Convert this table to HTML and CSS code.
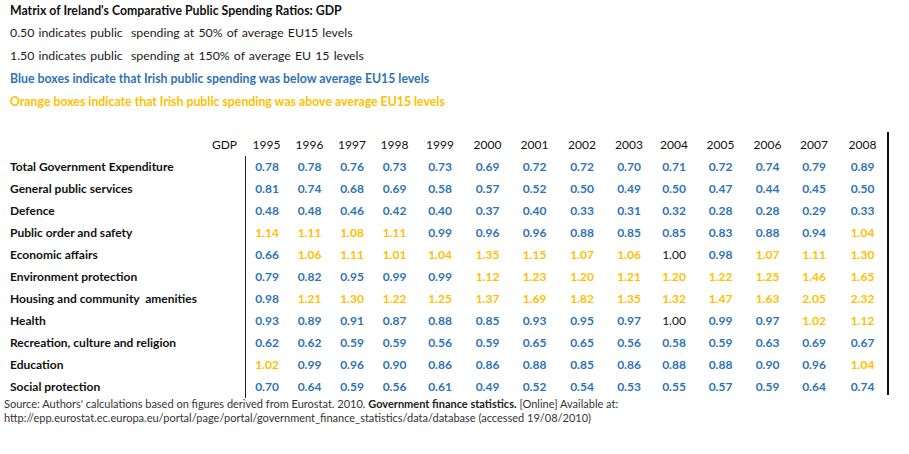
FILE: index.html
```html
<!DOCTYPE html>
<html lang="en">
<head>
<meta charset="utf-8">
<title>Matrix of Ireland's Comparative Public Spending Ratios: GDP</title>
<link rel="stylesheet" href="styles.css">
</head>
<body>
<div class="page">
  <div class="intro">
    <p class="title">Matrix of Ireland's Comparative Public Spending Ratios: GDP</p>
    <p class="note plain">0.50 indicates public&nbsp; spending at 50% of average EU15 levels</p>
    <p class="note plain">1.50 indicates public&nbsp; spending at 150% of average EU 15 levels</p>
    <p class="note key-blue">Blue boxes indicate that Irish public spending was below average EU15 levels</p>
    <p class="note key-orange">Orange boxes indicate that Irish public spending was above average EU15 levels</p>
  </div>

  <div class="matrix">
    <div class="row head">
      <div class="label gdp">GDP</div>
      <div>1995</div><div>1996</div><div>1997</div><div>1998</div><div>1999</div><div>2000</div><div>2001</div><div>2002</div><div>2003</div><div>2004</div><div>2005</div><div>2006</div><div>2007</div><div>2008</div>
    </div>
    <div class="row">
      <div class="label">Total Government Expenditure</div>
      <div class="b first">0.78</div><div class="b">0.78</div><div class="b">0.76</div><div class="b">0.73</div><div class="b">0.73</div><div class="b">0.69</div><div class="b">0.72</div><div class="b">0.72</div><div class="b">0.70</div><div class="b">0.71</div><div class="b">0.72</div><div class="b">0.74</div><div class="b">0.79</div><div class="b">0.89</div>
    </div>
    <div class="row">
      <div class="label">General public services</div>
      <div class="b first">0.81</div><div class="b">0.74</div><div class="b">0.68</div><div class="b">0.69</div><div class="b">0.58</div><div class="b">0.57</div><div class="b">0.52</div><div class="b">0.50</div><div class="b">0.49</div><div class="b">0.50</div><div class="b">0.47</div><div class="b">0.44</div><div class="b">0.45</div><div class="b">0.50</div>
    </div>
    <div class="row">
      <div class="label">Defence</div>
      <div class="b first">0.48</div><div class="b">0.48</div><div class="b">0.46</div><div class="b">0.42</div><div class="b">0.40</div><div class="b">0.37</div><div class="b">0.40</div><div class="b">0.33</div><div class="b">0.31</div><div class="b">0.32</div><div class="b">0.28</div><div class="b">0.28</div><div class="b">0.29</div><div class="b">0.33</div>
    </div>
    <div class="row">
      <div class="label">Public order and safety</div>
      <div class="o first">1.14</div><div class="o">1.11</div><div class="o">1.08</div><div class="o">1.11</div><div class="b">0.99</div><div class="b">0.96</div><div class="b">0.96</div><div class="b">0.88</div><div class="b">0.85</div><div class="b">0.85</div><div class="b">0.83</div><div class="b">0.88</div><div class="b">0.94</div><div class="o">1.04</div>
    </div>
    <div class="row">
      <div class="label">Economic affairs</div>
      <div class="b first">0.66</div><div class="o">1.06</div><div class="o">1.11</div><div class="o">1.01</div><div class="o">1.04</div><div class="o">1.35</div><div class="o">1.15</div><div class="o">1.07</div><div class="o">1.06</div><div class="k">1.00</div><div class="b">0.98</div><div class="o">1.07</div><div class="o">1.11</div><div class="o">1.30</div>
    </div>
    <div class="row">
      <div class="label">Environment protection</div>
      <div class="b first">0.79</div><div class="b">0.82</div><div class="b">0.95</div><div class="b">0.99</div><div class="b">0.99</div><div class="o">1.12</div><div class="o">1.23</div><div class="o">1.20</div><div class="o">1.21</div><div class="o">1.20</div><div class="o">1.22</div><div class="o">1.25</div><div class="o">1.46</div><div class="o">1.65</div>
    </div>
    <div class="row">
      <div class="label">Housing and community&nbsp; amenities</div>
      <div class="b first">0.98</div><div class="o">1.21</div><div class="o">1.30</div><div class="o">1.22</div><div class="o">1.25</div><div class="o">1.37</div><div class="o">1.69</div><div class="o">1.82</div><div class="o">1.35</div><div class="o">1.32</div><div class="o">1.47</div><div class="o">1.63</div><div class="o">2.05</div><div class="o">2.32</div>
    </div>
    <div class="row">
      <div class="label">Health</div>
      <div class="b first">0.93</div><div class="b">0.89</div><div class="b">0.91</div><div class="b">0.87</div><div class="b">0.88</div><div class="b">0.85</div><div class="b">0.93</div><div class="b">0.95</div><div class="b">0.97</div><div class="k">1.00</div><div class="b">0.99</div><div class="b">0.97</div><div class="o">1.02</div><div class="o">1.12</div>
    </div>
    <div class="row">
      <div class="label">Recreation, culture and religion</div>
      <div class="b first">0.62</div><div class="b">0.62</div><div class="b">0.59</div><div class="b">0.59</div><div class="b">0.56</div><div class="b">0.59</div><div class="b">0.65</div><div class="b">0.65</div><div class="b">0.56</div><div class="b">0.58</div><div class="b">0.59</div><div class="b">0.63</div><div class="b">0.69</div><div class="b">0.67</div>
    </div>
    <div class="row">
      <div class="label">Education</div>
      <div class="o first">1.02</div><div class="b">0.99</div><div class="b">0.96</div><div class="b">0.90</div><div class="b">0.86</div><div class="b">0.86</div><div class="b">0.88</div><div class="b">0.85</div><div class="b">0.86</div><div class="b">0.88</div><div class="b">0.88</div><div class="b">0.90</div><div class="b">0.96</div><div class="o">1.04</div>
    </div>
    <div class="row last">
      <div class="label">Social protection</div>
      <div class="b first">0.70</div><div class="b">0.64</div><div class="b">0.59</div><div class="b">0.56</div><div class="b">0.61</div><div class="b">0.49</div><div class="b">0.52</div><div class="b">0.54</div><div class="b">0.53</div><div class="b">0.55</div><div class="b">0.57</div><div class="b">0.59</div><div class="b">0.64</div><div class="b">0.74</div>
    </div>
  </div>

  <div class="source">
    <p>Source: Authors' calculations based on figures derived from Eurostat. 2010. <b>Government finance statistics.</b> [Online] Available at:</p>
    <p>http://epp.eurostat.ec.europa.eu/portal/page/portal/government_finance_statistics/data/database (accessed 19/08/2010)</p>
  </div>
</div>
</body>
</html>
```

FILE: styles.css
```css
html, body {
  margin: 0;
  padding: 0;
  background: #ffffff;
}

body {
  font-family: Lato, "Open Sans", "Liberation Sans", sans-serif;
  color: #1a1a1a;
  width: 909px;
  height: 454px;
  overflow: hidden;
}

p {
  margin: 0;
}

.intro {
  padding-left: 10px;
  font-size: 12.3px;
}

.title {
  font-weight: 700;
  line-height: 21px;
  color: #111111;
}

.note {
  line-height: 23px;
}

.plain {
  word-spacing: 1px;
  color: #1a1a1a;
}

.key-blue {
  color: #2e74b5;
  font-weight: 700;
}

.key-orange {
  color: #ffc000;
  font-weight: 700;
}

.matrix {
  margin-top: 19px;
  padding-top: 2px;
  width: 887px;
  height: 261px;
  border-right: 2px solid #111111;
  font-size: 12px;
}

.row {
  display: grid;
  grid-template-columns: 245px 43px 43px 42px 43px 48px 47px 47px 48px 46px 44px 49px 45px 48px 49px;
  height: 22px;
  align-items: center;
  text-align: center;
}

.row > div {
  line-height: 22px;
  font-weight: 700;
}

.row .label {
  text-align: left;
  padding-left: 10px;
  color: #111111;
}

.head > div {
  font-weight: 400;
  color: #111111;
}

.head .gdp {
  text-align: right;
  padding-right: 8px;
}

.row .first {
  border-left: 1.5px solid #222222;
}

.b { color: #2e74b5; }
.o { color: #ffc000; }
.row .k { color: #111111; font-weight: 400; }

.source {
  margin-top: 2px;
  padding-left: 4px;
  font-size: 11px;
  line-height: 14px;
  color: #333333;
}

.source b {
  font-weight: 700;
  color: #222222;
}
```
